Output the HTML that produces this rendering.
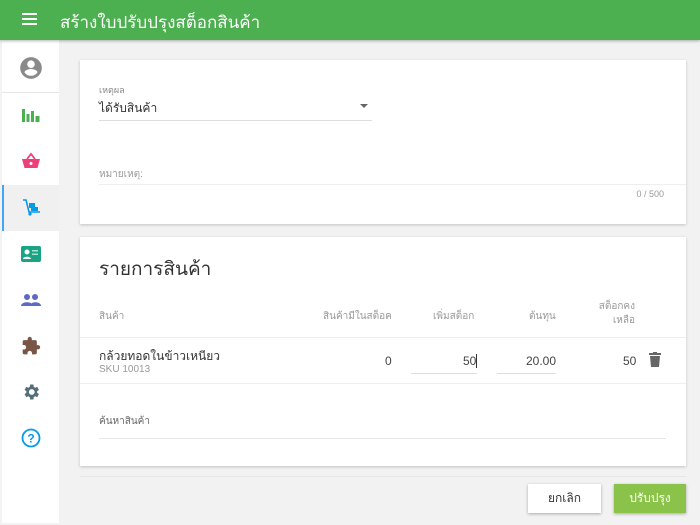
<!DOCTYPE html>
<html><head><meta charset="utf-8"><style>
*{box-sizing:border-box;margin:0;padding:0}
body{width:700px;height:525px;overflow:hidden;background:#f2f2f2;font-family:"Liberation Sans","Noto Sans CJK SC",sans-serif;position:relative}
.hdr{position:absolute;left:0;top:0;width:700px;height:40px;background:#4caf50;box-shadow:0 1px 3px rgba(0,0,0,.3);z-index:2}
.hdr .t{position:absolute;left:60px;top:9px;color:#fff;font-size:17px;font-weight:500}
.side{position:absolute;left:2px;top:40px;width:57px;height:483px;background:#fff}
.ic{position:absolute;left:0;width:57px;height:46px;display:flex;align-items:center;justify-content:center}
.card{position:absolute;left:80px;width:606px;background:#fff;box-shadow:0 1px 3px rgba(0,0,0,.2)}
.a{position:absolute;color:#333}
.line{position:absolute;height:1px;background:#ddd}
.btn{position:absolute;top:484px;height:29px;font-size:12px;display:flex;align-items:center;justify-content:center;box-shadow:0 1px 3px rgba(0,0,0,.3)}
</style></head><body>
<div class="hdr">
<svg style="position:absolute;left:22px;top:13px" width="15" height="12"><rect y="0" width="15" height="2" fill="#fff"/><rect y="5" width="15" height="2" fill="#fff"/><rect y="10" width="15" height="2" fill="#fff"/></svg>
<div class="t">สร้างใบปรับปรุงสต็อกสินค้า</div></div>
<div class="side">
<div class="ic" style="top:4px;height:48px"><svg width="26" height="26" viewBox="0 0 24 24"><path fill="#8a8a8a" d="M12 2a10 10 0 100 20 10 10 0 000-20zm0 3a3.5 3.5 0 110 7 3.5 3.5 0 010-7zm0 14.2a7.4 7.4 0 01-6-3.2c0-2 4-3.1 6-3.1s6 1.1 6 3.1a7.4 7.4 0 01-6 3.2z"/></svg></div>
<div class="line" style="left:0;top:52px;width:57px;background:#e6e6e6"></div>
<div class="ic" style="top:52px"><svg width="18" height="16"><rect x="0" y="2" width="3" height="13" fill="#4caf50"/><rect x="4.5" y="7" width="3" height="8" fill="#4caf50"/><rect x="9" y="4" width="3" height="11" fill="#4caf50"/><rect x="13.5" y="9" width="4" height="6" fill="#4caf50"/></svg></div>
<div class="ic" style="top:98px"><svg width="20" height="18" viewBox="0 0 20 18"><path d="M6 7l4-5 4 5" stroke="#ec407a" stroke-width="1.8" fill="none"/><path d="M1 7h18l-2.5 9h-13z" fill="#ec407a"/><circle cx="10" cy="11.5" r="1.5" fill="#fff"/></svg></div>
<div class="ic" style="top:145px;background:#f0f0f0;border-left:2px solid #42a5f5"><svg width="20" height="18" viewBox="0 0 20 18"><path d="M1 1h3l3 12h11" stroke="#039be5" stroke-width="1.6" fill="none"/><rect x="7" y="4" width="6" height="5" fill="#039be5"/><rect x="9" y="8" width="7" height="4" fill="#039be5"/><circle cx="8" cy="15" r="1.6" fill="#039be5"/></svg></div>
<div class="ic" style="top:191px"><svg width="20" height="16"><rect width="20" height="16" rx="2" fill="#1aa385"/><circle cx="6" cy="6" r="2.5" fill="#fff"/><path d="M2 13c0-3 8-3 8 0z" fill="#fff"/><rect x="11" y="4" width="6" height="1.5" fill="#a8e0d2"/><rect x="11" y="7.5" width="6" height="1.5" fill="#a8e0d2"/></svg></div>
<div class="ic" style="top:237px"><svg width="20" height="14"><circle cx="6" cy="4" r="3" fill="#5c6bc0"/><circle cx="14" cy="4" r="3" fill="#5c6bc0"/><path d="M0 13c0-5 12-5 12 0z" fill="#5c6bc0"/><path d="M9 13c0-5 11-5 11 0z" fill="#5c6bc0"/></svg></div>
<div class="ic" style="top:283px"><svg width="20" height="20" viewBox="0 0 24 24"><path fill="#795548" d="M20.5 11H19V7a2 2 0 00-2-2h-4V3.5a2.5 2.5 0 00-5 0V5H4a2 2 0 00-2 2v3.8h1.5a2.7 2.7 0 010 5.4H2V20a2 2 0 002 2h3.8v-1.5a2.7 2.7 0 015.4 0V22H17a2 2 0 002-2v-4h1.5a2.5 2.5 0 000-5z"/></svg></div>
<div class="ic" style="top:329px"><svg width="20" height="20" viewBox="0 0 24 24"><path fill="#546e7a" d="M19.4 13a7.6 7.6 0 000-2l2.1-1.6-2-3.5-2.5 1a7 7 0 00-1.7-1L14.9 3h-4l-.4 2.9a7 7 0 00-1.7 1l-2.5-1-2 3.5L6.4 11a7.6 7.6 0 000 2l-2.1 1.6 2 3.5 2.5-1a7 7 0 001.7 1l.4 2.9h4l.4-2.9a7 7 0 001.7-1l2.5 1 2-3.5zM12.9 15.5a3.5 3.5 0 110-7 3.5 3.5 0 010 7z"/></svg></div>
<div class="ic" style="top:375px"><svg width="20" height="20" viewBox="0 0 20 20"><circle cx="10" cy="10" r="8.5" stroke="#039be5" stroke-width="1.8" fill="none"/><text x="10" y="14.5" font-size="12" font-weight="bold" text-anchor="middle" fill="#039be5" font-family="Liberation Sans">?</text></svg></div>
</div>

<div class="card" style="top:60px;height:164px">
<div class="a" style="left:19px;top:23px;font-size:9px;color:#888">เหตุผล</div>
<div class="a" style="left:19px;top:39px;font-size:12px">ได้รับสินค้า</div>
<svg style="position:absolute;left:280px;top:44px" width="8" height="5"><path d="M0 0h8L4 4z" fill="#666"/></svg>
<div class="line" style="left:19px;top:60px;width:273px"></div>
<div class="a" style="left:19px;top:107px;font-size:10px;color:#999">หมายเหตุ:</div>
<div class="line" style="left:19px;top:124px;width:587px;background:#eee"></div>
<div class="a" style="right:22px;top:129px;font-size:9px;color:#999">0 / 500</div>
</div>

<div class="card" style="top:237px;height:229px">
<div class="a" style="left:19px;top:17px;font-size:19px;font-weight:500">รายการสินค้า</div>
<div class="a" style="left:19px;top:72px;font-size:10px;color:#999">สินค้า</div>
<div class="a" style="left:243px;top:72px;font-size:10px;color:#999">สินค้ามีในสต็อค</div>
<div class="a" style="left:353px;top:72px;font-size:10px;color:#999">เพิ่มสต็อก</div>
<div class="a" style="left:449px;top:72px;font-size:10px;color:#999">ต้นทุน</div>
<div class="a" style="left:510px;top:63px;width:45px;text-align:right;font-size:10px;color:#999;line-height:14px">สต็อกคง<br>เหลือ</div>
<div class="line" style="left:0;top:100px;width:606px;background:#eee"></div>
<div class="a" style="left:19px;top:110px;font-size:12px">กล้วยทอดในข้าวเหนียว</div>
<div class="a" style="left:19px;top:127px;font-size:10px;color:#999">SKU 10013</div>
<div class="a" style="left:305px;top:117px;font-size:12px;color:#444">0</div>
<div class="a" style="left:383px;top:117px;font-size:12px;color:#444">50<span style="border-left:1px solid #333;margin-left:0"></span></div>
<div class="line" style="left:331px;top:136px;width:66px"></div>
<div class="a" style="left:417px;width:59px;text-align:right;top:117px;font-size:12px;color:#444">20.00</div>
<div class="line" style="left:417px;top:136px;width:59px"></div>
<div class="a" style="left:543px;top:117px;font-size:12px;color:#444">50</div>
<svg style="position:absolute;left:569px;top:115px" width="12" height="15" viewBox="0 0 12 15"><rect x="0" y="1" width="12" height="2" fill="#666"/><rect x="4" y="0" width="4" height="2" fill="#666"/><path d="M1 4h10l-1 11H2z" fill="#666"/></svg>
<div class="line" style="left:0;top:146px;width:606px;background:#eee"></div>
<div class="a" style="left:19px;top:177px;font-size:10px;color:#666">ค้นหาสินค้า</div>
<div class="line" style="left:19px;top:201px;width:567px;background:#e6e6e6"></div>
</div>
<div class="line" style="left:80px;top:476px;width:606px;background:#e6e6e6"></div>
<div class="btn" style="left:528px;width:73px;background:#fff;color:#333">ยกเลิก</div>
<div class="btn" style="left:614px;width:72px;background:#8bc34a;color:#fff">ปรับปรุง</div>
</body></html>
